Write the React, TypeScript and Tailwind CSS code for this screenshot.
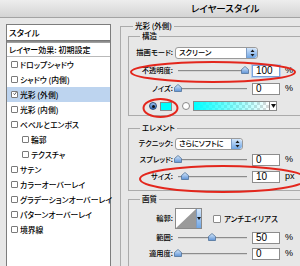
import React from 'react';

const jp = "font-['Noto_Sans_CJK_JP',sans-serif] [font-feature-settings:'palt'] font-medium";

const CheckBox: React.FC<{ checked?: boolean }> = ({ checked }) => (
  <div className="w-[7px] h-[7px] border border-[#7a7a7a] bg-white rounded-[1px] flex items-center justify-center shrink-0">
    {checked && (
      <svg width="9" height="9" viewBox="0 0 9 9" className="-mt-[2px] ml-[1px]">
        <path d="M1 4.5 L3.5 7 L8 1" stroke="#222" strokeWidth="1.6" fill="none" />
      </svg>
    )}
  </div>
);

const ListItem: React.FC<{ label: string; checked?: boolean; selected?: boolean; indent?: boolean }> = ({
  label,
  checked,
  selected,
  indent,
}) => (
  <div className={`h-[15px] flex items-center whitespace-nowrap ${selected ? 'bg-[#bdd4ef]' : ''} ${indent ? 'pl-[15px]' : 'pl-[4px]'}`}>
    <CheckBox checked={checked} />
    <span className="ml-[2px] text-[7.8px] leading-none">{label}</span>
  </div>
);

const Thumb: React.FC = () => (
  <svg width="8" height="8" viewBox="0 0 8 8">
    <defs>
      <linearGradient id="th" x1="0" y1="0" x2="0" y2="1">
        <stop offset="0" stopColor="#d8e9fb" />
        <stop offset="1" stopColor="#5e93d6" />
      </linearGradient>
    </defs>
    <path d="M4 0.5 L7.5 3.5 L7.5 7.5 L0.5 7.5 L0.5 3.5 Z" fill="url(#th)" stroke="#51729b" strokeWidth="0.8" />
  </svg>
);

const Slider: React.FC<{ value: number }> = ({ value }) => (
  <div className="relative w-[75px] h-[12px] shrink-0">
    <div className="absolute left-[3px] right-[3px] top-[5px] h-[2px] bg-[#8c8c8c] border-b border-[#d4d4d4]" />
    <div className="absolute top-[1px]" style={{ left: -1 + (value / 100) * 67 }}>
      <Thumb />
    </div>
  </div>
);

const NumBox: React.FC<{ value: string; unit: string; focus?: boolean }> = ({ value, unit, focus }) => (
  <>
    <div
      className={`ml-[2px] w-[28px] h-[12px] bg-white flex items-center pl-[3px] font-['Liberation_Sans',sans-serif] font-normal text-[10px] leading-none ${
        focus ? 'border border-[#7aa3da] shadow-[0_0_0_1px_#b6cff0]' : 'border border-[#8d8d8d]'
      }`}
    >
      {value}
    </div>
    <span className="ml-[5px] font-['Liberation_Sans',sans-serif] font-normal text-[9px]">{unit}</span>
  </>
);

const Stepper: React.FC = () => (
  <div className="w-[11px] h-full bg-gradient-to-b from-[#d3e6fb] to-[#6ea5e4] border-l border-[#7d9cc4] rounded-r-[3px] flex items-center justify-center shrink-0">
    <svg width="5" height="8" viewBox="0 0 5 8">
      <path d="M2.5 0.5 L4.5 3 L0.5 3 Z M0.5 5 L4.5 5 L2.5 7.5 Z" fill="#1a1a1a" />
    </svg>
  </div>
);

const Select: React.FC<{ label: string; width: string }> = ({ label, width }) => (
  <div className={`${width} h-[12px] bg-white border border-[#9a9a9a] rounded-[3px] flex items-center justify-between overflow-hidden`}>
    <span className="pl-[3px] text-[7.3px] leading-none whitespace-nowrap">{label}</span>
    <Stepper />
  </div>
);

const Row: React.FC<{ label: string; className?: string; children: React.ReactNode }> = ({ label, className, children }) => (
  <div className={`flex items-center h-[12px] ${className ?? ''}`}>
    <div className="w-[44px] text-right text-[7.3px] leading-none shrink-0 whitespace-nowrap">{label}</div>
    <div className="ml-[2px] flex items-center">{children}</div>
  </div>
);

const Group: React.FC<{ title: string; className?: string; children: React.ReactNode }> = ({ title, className, children }) => (
  <fieldset className={`border border-[#ababab] w-[190px] ${className ?? ''}`}>
    <legend className="ml-[11px] px-[2px] text-[7.5px] leading-[8px]">{title}</legend>
    {children}
  </fieldset>
);

const App: React.FC = () => {
  return (
    <div className={`relative w-[300px] h-[266px] overflow-hidden bg-[#e7e7e7] flex flex-col text-black ${jp}`}>
      {/* title bar */}
      <div className="h-[18px] shrink-0 bg-gradient-to-b from-[#ededed] to-[#d4d4d4] border-b border-[#a3a3a3] flex items-center pl-[191px] text-[9.5px] leading-none">
        レイヤースタイル
      </div>

      <div className="flex flex-1 items-start">
        {/* style list */}
        <div className="ml-[6px] mt-[6px] w-[105px] h-[260px] shrink-0 bg-white border border-[#7d7d7d]">
          <div className="h-[15px] flex items-center pl-[2px] text-[8.5px] leading-none">スタイル</div>
          <div className="h-[3px] bg-gradient-to-b from-[#6f6f6f] to-[#a9a9a9]" />
          <div className="h-[14px] flex items-center pl-[2px] text-[8px] leading-none border-b border-[#b9b9b9] whitespace-nowrap">
            レイヤー効果: 初期設定
          </div>
          <ListItem label="ドロップシャドウ" />
          <ListItem label="シャドウ (内側)" />
          <ListItem label="光彩 (外側)" checked selected />
          <ListItem label="光彩 (内側)" />
          <ListItem label="ベベルとエンボス" />
          <ListItem label="輪郭" indent />
          <ListItem label="テクスチャ" indent />
          <ListItem label="サテン" />
          <ListItem label="カラーオーバーレイ" />
          <ListItem label="グラデーションオーバーレイ" />
          <ListItem label="パターンオーバーレイ" />
          <ListItem label="境界線" />
        </div>

        {/* settings */}
        <fieldset className="ml-[9px] mt-[4px] border border-[#ababab] w-[200px] h-[260px] shrink-0">
          <legend className="ml-[12px] px-[2px] text-[7.5px] leading-[8px]">光彩 (外側)</legend>
          <div className="pl-[7px] pt-[2px]">
            <Group title="構造" className="pb-[3px]">
              <div className="pt-[7px] flex flex-col">
                <Row label="描画モード:">
                  <Select label="スクリーン" width="w-[83px]" />
                </Row>
                <Row label="不透明度:" className="mt-[6px]">
                  <Slider value={100} />
                  <NumBox value="100" unit="%" focus />
                </Row>
                <Row label="ノイズ:" className="mt-[6px]">
                  <Slider value={0} />
                  <NumBox value="0" unit="%" />
                </Row>
                <div className="mt-[5px] h-[12px] flex items-center pl-[20px]">
                  <div className="w-[8px] h-[8px] rounded-full bg-gradient-to-b from-[#9cc3f2] to-[#2d63b3] border border-[#2f4f7a] flex items-center justify-center">
                    <div className="w-[3px] h-[3px] rounded-full bg-[#111]" />
                  </div>
                  <div className="ml-[3px] w-[12px] h-[9px] bg-[#00ffff] border border-[#8a8a8a]" />
                  <div className="ml-[10px] w-[8px] h-[8px] rounded-full bg-white border border-[#8a8a8a]" />
                  <div className="ml-[3px] w-[84px] h-[10px] border border-[#8a8a8a] flex">
                    <div className="flex-1 bg-[conic-gradient(#d9d9d9_25%,#ffffff_0_50%,#d9d9d9_0_75%,#ffffff_0)] bg-[length:6px_6px]">
                      <div className="h-full bg-gradient-to-r from-[#00ffff] to-[#00ffff00]" />
                    </div>
                    <div className="w-[7px] bg-white border-l border-[#8a8a8a] flex items-center justify-center">
                      <svg width="5" height="4" viewBox="0 0 5 4">
                        <path d="M0 0 L5 0 L2.5 4 Z" fill="#111" />
                      </svg>
                    </div>
                  </div>
                </div>
              </div>
            </Group>

            <Group title="エレメント" className="mt-[8px] pb-[7px]">
              <div className="pt-[6px] flex flex-col">
                <Row label="テクニック:">
                  <Select label="さらにソフトに" width="w-[68px]" />
                </Row>
                <Row label="スプレッド:" className="mt-[4px]">
                  <Slider value={0} />
                  <NumBox value="0" unit="%" />
                </Row>
                <Row label="サイズ:" className="mt-[5px]">
                  <Slider value={10} />
                  <NumBox value="10" unit="px" />
                </Row>
              </div>
            </Group>

            <Group title="画質" className="mt-[4px] h-[80px]">
              <div className="pt-[5px] flex flex-col">
                <div className="flex items-center h-[21px]">
                  <div className="w-[44px] text-right text-[7.3px] leading-none">輪郭:</div>
                  <div className="ml-[2px] w-[27px] h-[21px] bg-white border border-[#8a8a8a] flex">
                    <svg width="20" height="19" viewBox="0 0 20 19" className="shrink-0">
                      <path d="M0 19 L20 0 L20 19 Z" fill="#9a9a9a" />
                    </svg>
                    <div className="flex-1 bg-gradient-to-b from-[#d3e6fb] to-[#6ea5e4] border-l border-[#7d9cc4] flex items-center justify-center">
                      <svg width="4" height="3" viewBox="0 0 4 3">
                        <path d="M0 0 L4 0 L2 3 Z" fill="#111" />
                      </svg>
                    </div>
                  </div>
                  <div className="ml-[11px] w-[8px] h-[8px] bg-white border border-[#8a8a8a] rounded-[1px]" />
                  <span className="ml-[3px] text-[7.5px] leading-none">アンチエイリアス</span>
                </div>
                <Row label="範囲:" className="mt-[3px]">
                  <Slider value={50} />
                  <NumBox value="50" unit="%" />
                </Row>
                <Row label="適用度:" className="mt-[4px]">
                  <Slider value={0} />
                  <NumBox value="0" unit="%" />
                </Row>
              </div>
            </Group>
          </div>
        </fieldset>
      </div>

      {/* red annotation marks */}
      <svg className="absolute inset-0 pointer-events-none" width="300" height="266" viewBox="0 0 300 266">
        <ellipse cx="213" cy="72" rx="82" ry="10" fill="none" stroke="#e3261c" strokeWidth="2" />
        <ellipse cx="160.5" cy="108" rx="17" ry="9" fill="none" stroke="#e3261c" strokeWidth="2" />
        <ellipse cx="223" cy="179" rx="83" ry="13" fill="none" stroke="#e3261c" strokeWidth="2" />
      </svg>
    </div>
  );
};

export default App;
